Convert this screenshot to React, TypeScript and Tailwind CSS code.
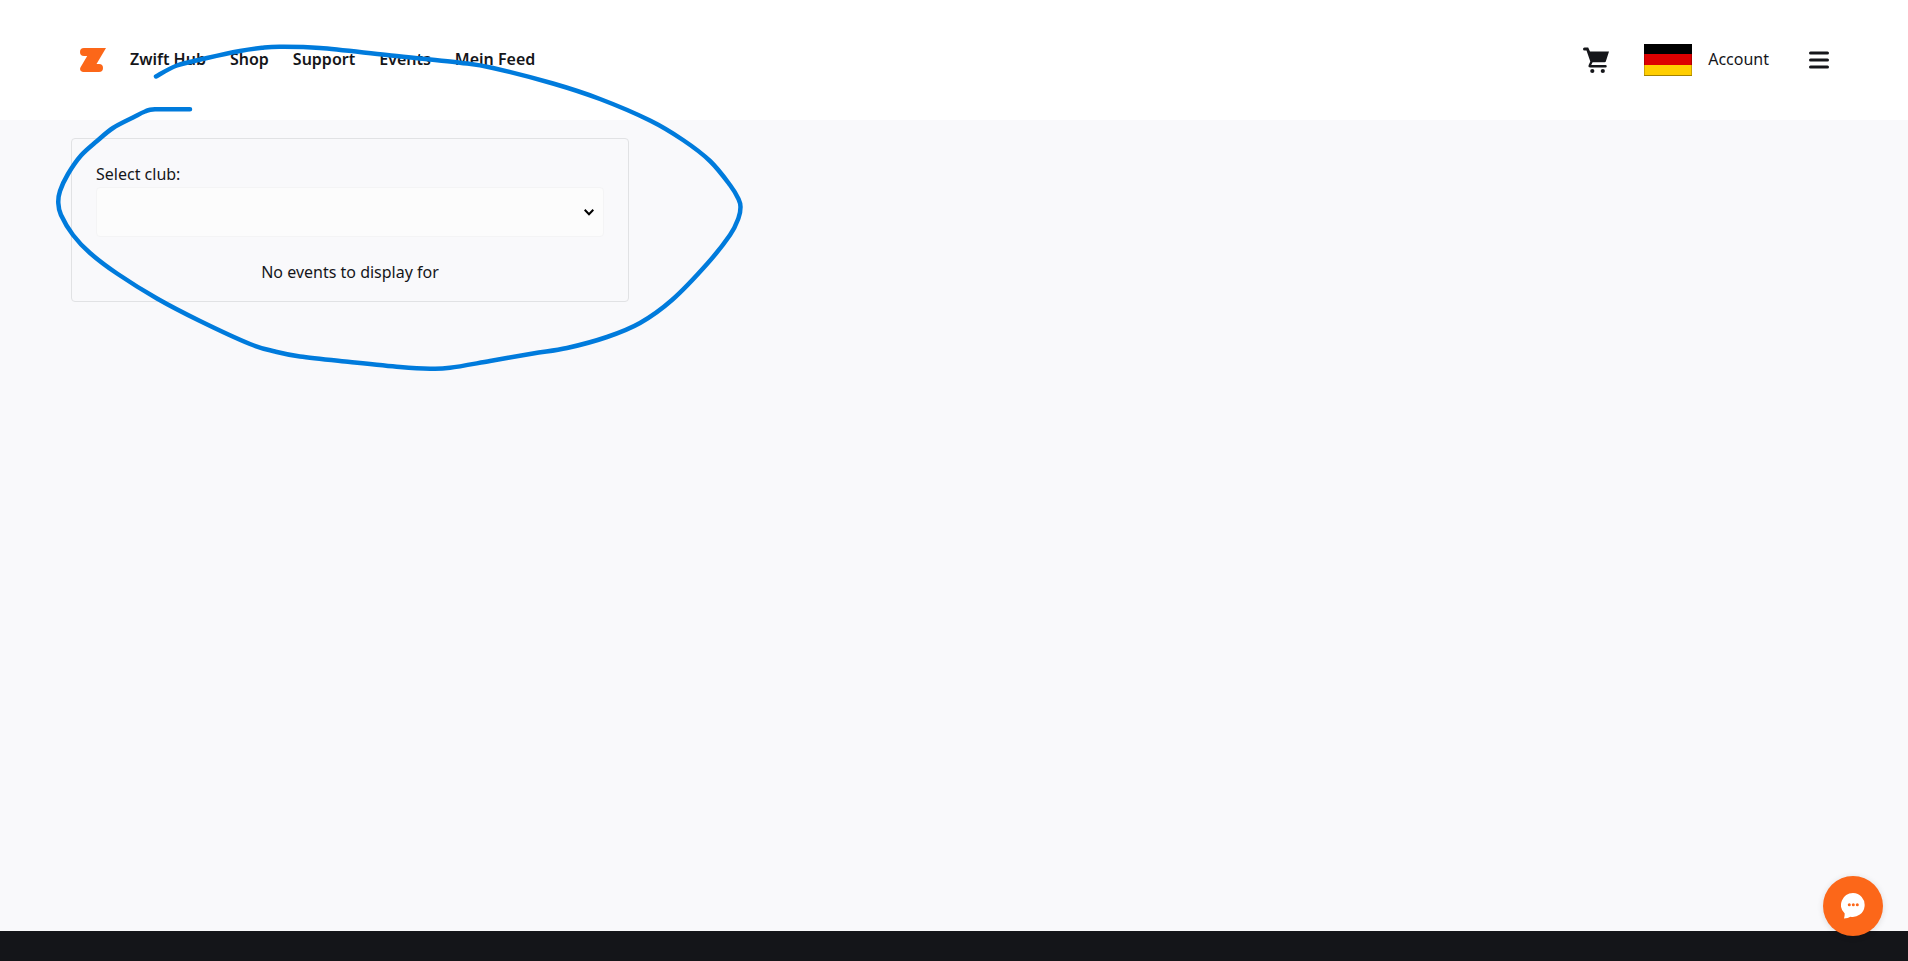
type Point = [number, number];

const strokePoints: Point[] = [
  [156, 76.5], [177, 65.5], [207, 58], [240, 51], [262, 47.8], [280, 46.8], [320, 48], [387, 55], [460, 62.700], [493, 68],
  [553, 83.5], [600, 99], [650, 120.5], [683, 140], [710, 161], [730, 185], [738.5, 199], [740.500, 207], [738.5, 218],
  [730, 235], [707, 264], [672, 300], [640, 323], [607, 337], [567, 348], [533, 353.5], [490, 361], [450, 367.800], [430, 368.700],
  [400, 367], [350, 362], [300, 356.500], [275, 351.500], [250, 344], [200, 321], [157, 298.500], [117, 273.500], [90, 253], [73, 235],
  [61, 215], [58.300, 203], [60, 191], [68, 174], [81, 155.500], [97, 141], [113, 128], [133, 117.500], [145, 111.500], [155, 109.300], [190, 109.300],
];

function smoothPath(points: Point[]): string {
  let d = `M${points[0][0]} ${points[0][1]}`;
  for (let i = 0; i < points.length - 1; i++) {
    const a = points[Math.max(0, i - 1)];
    const b = points[i];
    const c = points[i + 1];
    const e = points[Math.min(points.length - 1, i + 2)];
    d += `C${b[0] + (c[0] - a[0]) / 6} ${b[1] + (c[1] - a[1]) / 6} ${c[0] - (e[0] - b[0]) / 6} ${c[1] - (e[1] - b[1]) / 6} ${c[0]} ${c[1]}`;
  }
  return d;
}

const links = ["Zwift Hub", "Shop", "Support", "Events", "Mein Feed"];

function Header() {
  return (
    <header className="flex h-[120px] items-center justify-between bg-white pr-[79px] pl-20 text-[#15161a]">
      <nav aria-label="Main" className="flex items-center gap-6 text-base font-semibold">
        <a href="#home" aria-label="Zwift">
          <svg width="26" height="24" viewBox="0 0 26 24" fill="#fc6719">
            <path d="M4 0H26L16.500 16H19a4 4 0 0 1 0 8H3.500C.5 24-.8 21.500.7 19L7.200 8H4a4 4 0 0 1 0-8Z" />
          </svg>
        </a>
        {links.map((link) => (
          <a key={link} href="#nav" className="pb-0.5">{link}</a>
        ))}
      </nav>
      <div className="flex items-center">
        <button type="button" aria-label="Cart">
          <svg width="27" height="27" viewBox="0 0 27 27" fill="currentColor">
            <path d="M1.500.5H5.200L7 4.500H26L22.800 14.500Q22.500 15.300 21.600 15.300H9.600L8.200 18H22.500a1.200 1.200 0 0 1 0 2.500H7.200Q5 20.500 5.600 18.300L7.300 14.500 3.500 3.500H1.500a1.400 1.400 0 0 1 0-3Z" />
            <circle cx="9.300" cy="24" r="2.100" />
            <circle cx="19.800" cy="24" r="2.100" />
          </svg>
        </button>
        <button type="button" aria-label="Deutsch" className="ml-[34px]">
          <svg width="48" height="32" viewBox="0 0 48 32">
            <path fill="#000" d="M0 0h48v11H0z" />
            <path fill="#dd0000" d="M0 10h48v11H0z" />
            <path fill="#ffce00" d="M0 21h48v11H0z" />
            <path fill="none" stroke="#000" strokeOpacity=".2" d="M.5.5h47v31H.5z" />
            <path stroke="#000" strokeOpacity=".2" d="M0 31.500h48" />
          </svg>
        </button>
        <a href="#account" className="ml-4 pb-0.5 text-base">Account</a>
        <button type="button" aria-label="Menu" className="ml-10">
          <svg width="20" height="18" viewBox="0 0 20 18" stroke="currentColor" strokeWidth="3" strokeLinecap="round">
            <path d="M1.500 2h17M1.500 9h17M1.500 16h17" />
          </svg>
        </button>
      </div>
    </header>
  );
}

function ClubEvents() {
  return (
    <section className="max-w-[558px] rounded-[4px] border border-[#e1e2e4] px-6 pt-6 pb-[18px] text-base leading-[22px] text-[#15161a]">
      <label htmlFor="club" className="mb-0.5 block">Select club:</label>
      <div className="relative">
        <select
          id="club"
          className="h-[50px] w-full appearance-none rounded-[4px] border border-[#f4f4f5] bg-[#fcfcfc] px-3"
        />
        <svg className="pointer-events-none absolute top-[22px] right-[10px]" width="10" height="7" viewBox="0 0 10 7" fill="none" stroke="#000" strokeWidth="2">
          <path d="M.7.800 5 5.200 9.300.8" />
        </svg>
      </div>
      <p className="mt-6 text-center">No events to display for</p>
    </section>
  );
}

export default function App() {
  return (
    <div className="relative flex min-h-screen flex-col bg-[#f9f9fb] font-['Noto_Sans',sans-serif]">
      <Header />
      <main className="grow px-[71px] pt-[18px] pb-10">
        <ClubEvents />
      </main>
      <footer className="h-[30px] bg-[#141519]" />
      <svg className="pointer-events-none absolute top-0 left-0" width="760" height="390" viewBox="0 0 760 390" fill="none" aria-hidden="true">
        <path d={smoothPath(strokePoints)} stroke="#007bdc" strokeWidth="4.500" strokeLinecap="round" strokeLinejoin="round" />
      </svg>
      <button
        type="button"
        aria-label="Open chat"
        className="fixed right-[25px] bottom-[25px] flex size-[60px] items-center justify-center rounded-full bg-[#fc6719] shadow-[0_1px_6px_rgba(0,0,0,0.12)]"
      >
        <svg width="24" height="26" viewBox="0 0 24 26">
          <path fill="#fff" d="M12 0a12 12 0 1 1-2.500 23.800Q7 25.300 3 25.500 3.700 23.500 3.700 20.600A12 12 0 0 1 12 0Z" />
          <g fill="#fc6719">
            <circle cx="8.300" cy="11.700" r="1.500" />
            <circle cx="12.300" cy="11.700" r="1.500" />
            <circle cx="16.300" cy="11.700" r="1.500" />
          </g>
        </svg>
      </button>
    </div>
  );
}
